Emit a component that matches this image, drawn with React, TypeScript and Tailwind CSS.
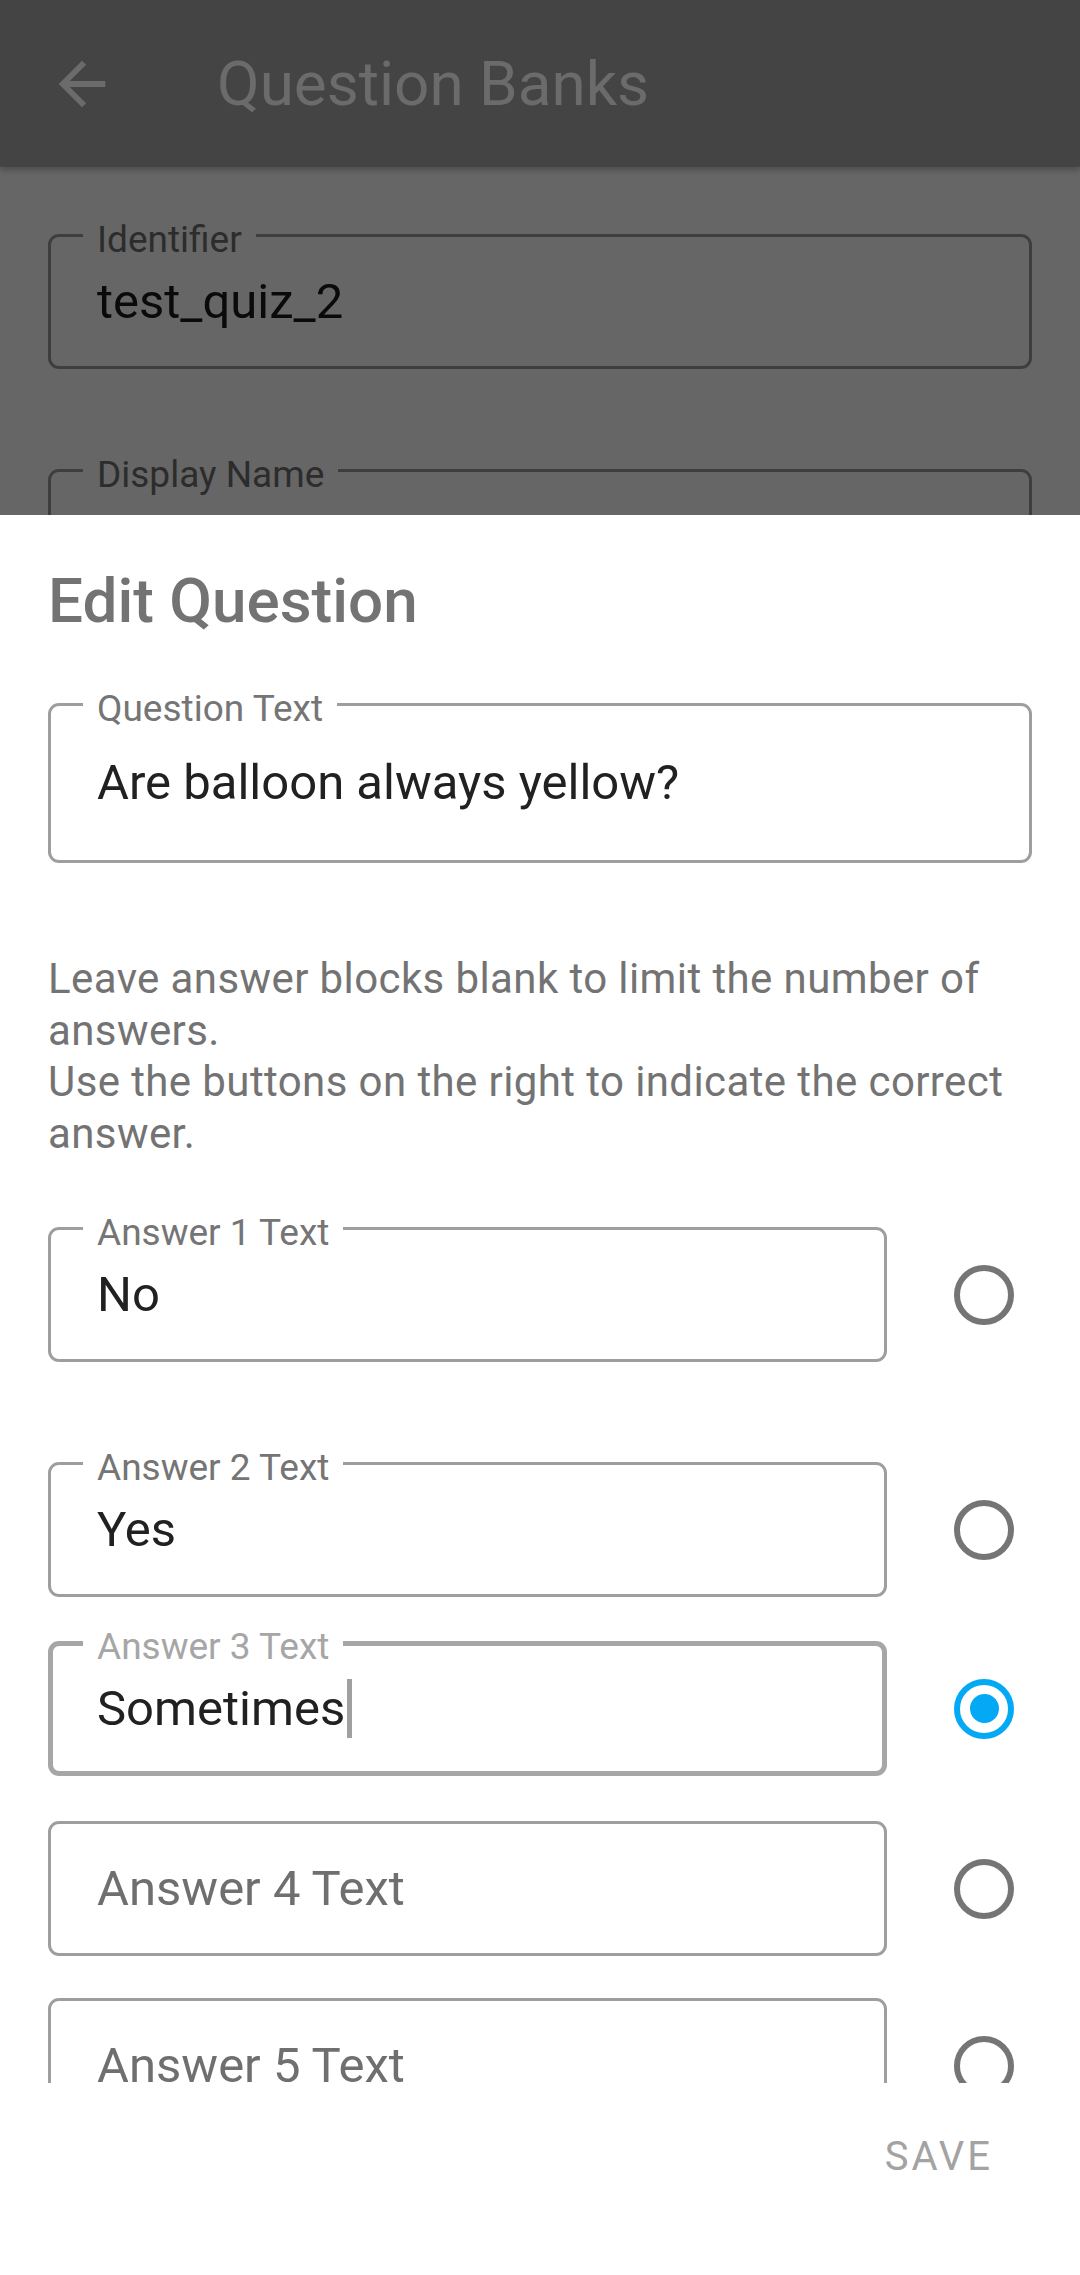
// Edit Question sheet over the Question Banks screen.
// Sizes are in device pixels of a 1080px wide phone screenshot.

type FieldTone = 'sheet' | 'dim';

function OutlinedField({
  label,
  value,
  placeholder,
  focused = false,
  tone = 'sheet',
  className = '',
}: {
  label?: string;
  value?: string;
  placeholder?: string;
  focused?: boolean;
  tone?: FieldTone;
  className?: string;
}) {
  const box =
    tone === 'dim'
      ? 'border-[3px] border-[#3e3e3e] pl-[46px]'
      : focused
        ? 'border-[5px] border-[#a6a6a6] pl-[44px]'
        : 'border-[3px] border-[#9e9e9e] pl-[46px]';
  const labelPos = focused ? '-top-[18px] left-[30px]' : '-top-[16px] left-[32px]';
  const labelTone =
    tone === 'dim' ? 'bg-[#666666] text-[#2c2c2c]' : focused ? 'bg-white text-[#a6a6a6]' : 'bg-white text-[#757575]';

  return (
    <div className={`relative flex shrink-0 items-center rounded-[11px] ${box} ${className}`}>
      {label && (
        <span className={`absolute ${labelPos} ${labelTone} px-[14px] text-[37px] leading-[37px]`}>{label}</span>
      )}
      {value ? (
        <span className={`flex items-center text-[49px] leading-[58px] ${tone === 'dim' ? 'text-[#0a0a0a]' : 'text-[#212121]'}`}>
          {value}
          {focused && <span className="ml-[2px] inline-block h-[59px] w-[5px] bg-[#a0a0a0]" />}
        </span>
      ) : (
        <span className="text-[49px] leading-[58px] text-[#6f6f6f]">{placeholder}</span>
      )}
    </div>
  );
}

function Radio({ checked = false }: { checked?: boolean }) {
  if (checked) {
    return (
      <span className="flex h-[60px] w-[60px] items-center justify-center rounded-full border-[6px] border-[#03a9f4]">
        <span className="block h-[29px] w-[29px] rounded-full bg-[#03a9f4]" />
      </span>
    );
  }
  return <span className="block h-[60px] w-[60px] rounded-full border-[6px] border-[#757575]" />;
}

function AnswerRow({
  index,
  value,
  focused,
  checked,
  showLabel = true,
  className = '',
}: {
  index: number;
  value?: string;
  focused?: boolean;
  checked?: boolean;
  showLabel?: boolean;
  className?: string;
}) {
  const name = `Answer ${index} Text`;
  return (
    <div className={`flex shrink-0 items-center ${className}`}>
      <OutlinedField
        label={showLabel ? name : undefined}
        value={value}
        placeholder={name}
        focused={focused}
        className="h-[135px] flex-1"
      />
      <div className="shrink-0 pl-[67px] pr-[18px]">
        <Radio checked={checked} />
      </div>
    </div>
  );
}

function ArrowBack() {
  return (
    <svg viewBox="0 0 24 24" className="h-[70px] w-[70px]" fill="#6b6b6b">
      <path d="M20 11H7.83l5.59-5.59L12 4l-8 8 8 8 1.41-1.41L7.83 13H20v-2z" />
    </svg>
  );
}

export default function App() {
  return (
    <div className="flex h-[2275px] w-[1080px] flex-col overflow-hidden bg-white font-['Roboto',sans-serif]">
      {/* dimmed screen behind the sheet */}
      <div className="h-[515px] shrink-0 overflow-hidden bg-[#666666]">
        <div className="flex h-[167px] items-center bg-[#444444] pl-[47px] shadow-[0_3px_6px_rgba(0,0,0,0.25)]">
          <ArrowBack />
          <span className="ml-[100px] text-[62px] leading-[62px] text-[#6b6b6b]">Question Banks</span>
        </div>
        <div className="flex flex-col px-[48px] pt-[67px]">
          <OutlinedField tone="dim" label="Identifier" value="test_quiz_2" className="h-[135px]" />
          <OutlinedField tone="dim" label="Display Name" value="" className="mt-[100px] h-[135px]" />
        </div>
      </div>

      {/* sheet */}
      <div className="flex flex-1 flex-col">
        <div className="flex h-[1568px] shrink-0 flex-col overflow-hidden px-[48px] pt-[48px]">
          <h2 className="shrink-0 text-[62px] font-medium leading-[76px] text-[#737373]">Edit Question</h2>

          <OutlinedField label="Question Text" value="Are balloon always yellow?" className="mt-[64px] h-[160px]" />

          <p className="mt-[90px] shrink-0 text-[42px] leading-[51.5px] tracking-[0.4px] text-[#737373]">
            Leave answer blocks blank to limit the number of answers.
            <br />
            Use the buttons on the right to indicate the correct answer.
          </p>

          <AnswerRow index={1} value="No" className="mt-[68px]" />
          <AnswerRow index={2} value="Yes" className="mt-[100px]" />
          <AnswerRow index={3} value="Sometimes" focused checked className="mt-[44px]" />
          <AnswerRow index={4} showLabel={false} className="mt-[45px]" />
          <AnswerRow index={5} showLabel={false} className="mt-[42px]" />
        </div>

        <div className="flex justify-end pr-[87px] pt-[54px]">
          <button className="text-[40px] leading-[40px] tracking-[3px] text-[#a3a3a3]">SAVE</button>
        </div>
      </div>
    </div>
  );
}
